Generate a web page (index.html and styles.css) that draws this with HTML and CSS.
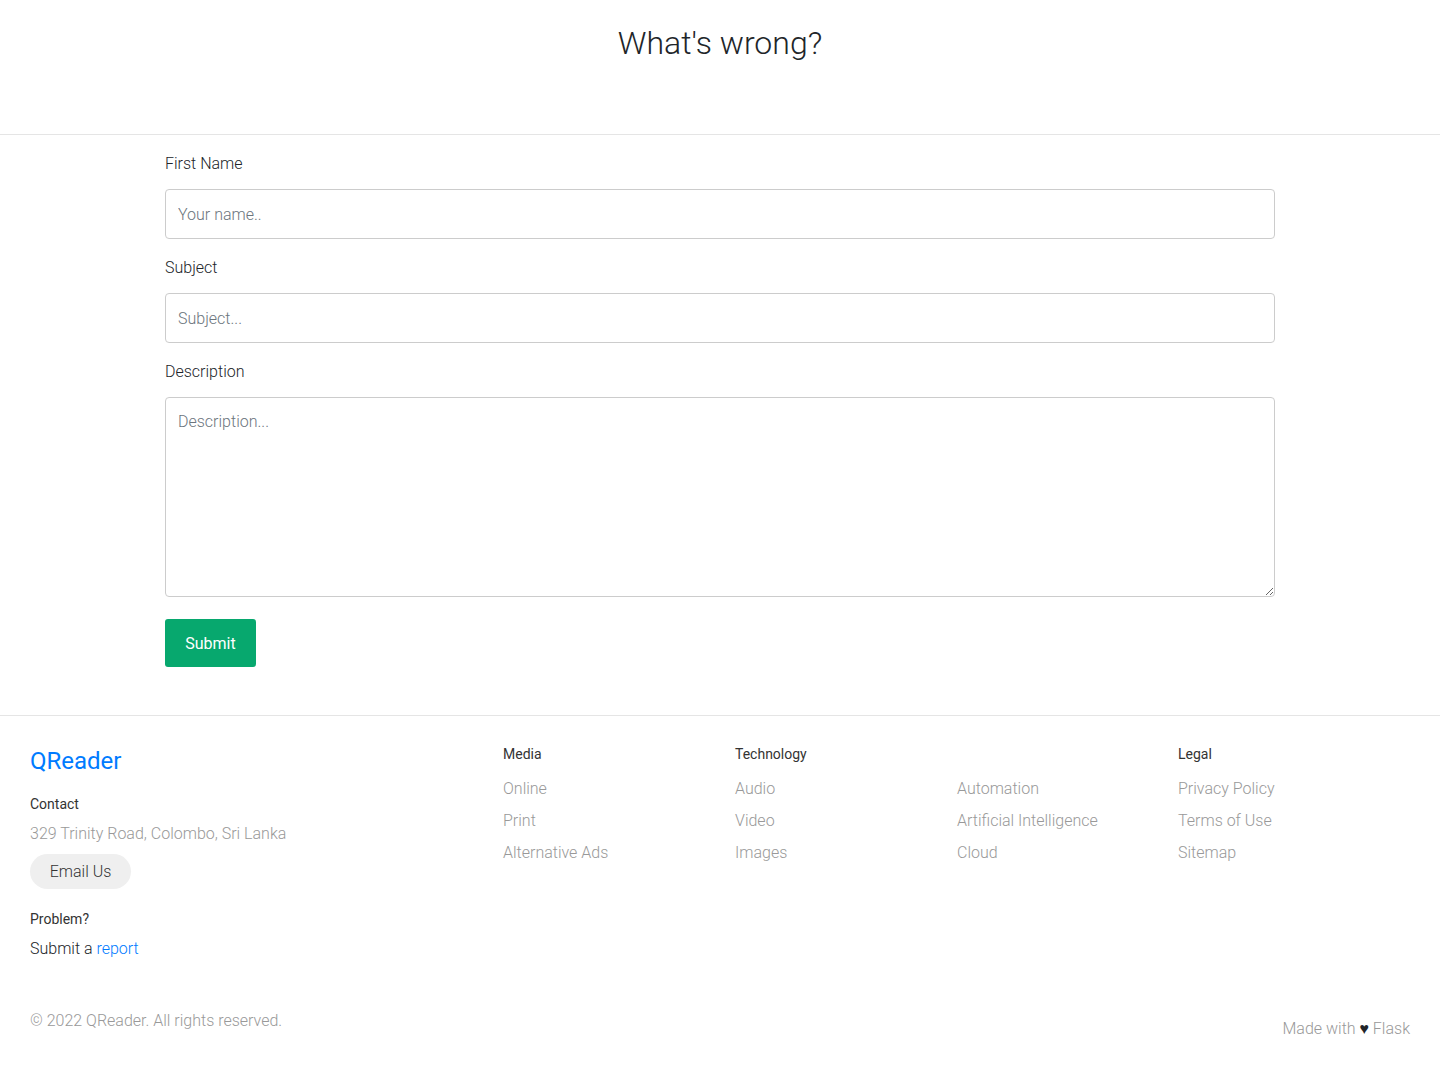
FILE: index.html
```html
<!DOCTYPE html>
<html lang="en">
<head>
<meta charset="utf-8">
<title>What's wrong? - QReader</title>
<link rel="stylesheet" href="styles.css">
</head>
<body>
<header class="page-header">
  <h1 class="page-title">What's wrong?</h1>
</header>
<main class="form-wrap">
  <form class="report-form">
    <label class="field-label" for="fname">First Name</label>
    <input class="field-input" id="fname" type="text" placeholder="Your name..">
    <label class="field-label" for="subject">Subject</label>
    <input class="field-input" id="subject" type="text" placeholder="Subject...">
    <label class="field-label" for="desc">Description</label>
    <textarea class="field-area" id="desc" placeholder="Description..."></textarea>
    <button class="submit-btn" type="button">Submit</button>
  </form>
</main>
<footer class="site-footer">
  <div class="footer-grid">
    <div class="footer-brand">
      <a class="brand" href="#">QReader</a>
      <h4 class="foot-head contact-head">Contact</h4>
      <p class="address">329 Trinity Road, Colombo, Sri Lanka</p>
      <a class="email-btn" href="#">Email Us</a>
      <h4 class="foot-head problem-head">Problem?</h4>
      <p class="report-line">Submit a <a href="#" class="report-link">report</a></p>
    </div>
    <div class="foot-col">
      <h4 class="foot-head col-head">Media</h4>
      <ul class="foot-links">
        <li><a href="#">Online</a></li>
        <li><a href="#">Print</a></li>
        <li><a href="#">Alternative Ads</a></li>
      </ul>
    </div>
    <div class="foot-col">
      <h4 class="foot-head col-head">Technology</h4>
      <ul class="foot-links">
        <li><a href="#">Audio</a></li>
        <li><a href="#">Video</a></li>
        <li><a href="#">Images</a></li>
      </ul>
    </div>
    <div class="foot-col">
      <h4 class="foot-head col-head col-head-empty">&nbsp;</h4>
      <ul class="foot-links">
        <li><a href="#">Automation</a></li>
        <li><a href="#">Artificial Intelligence</a></li>
        <li><a href="#">Cloud</a></li>
      </ul>
    </div>
    <div class="foot-col">
      <h4 class="foot-head col-head">Legal</h4>
      <ul class="foot-links">
        <li><a href="#">Privacy Policy</a></li>
        <li><a href="#">Terms of Use</a></li>
        <li><a href="#">Sitemap</a></li>
      </ul>
    </div>
  </div>
  <div class="footer-bottom">
    <p class="copyright">© 2022 QReader. All rights reserved.</p>
    <p class="made-with">Made with <span class="heart">♥</span> Flask</p>
  </div>
</footer>
</body>
</html>
```

FILE: styles.css
```css
* { box-sizing: border-box; }
html, body { margin: 0; padding: 0; }
body {
  font-family: Roboto, "Liberation Sans", sans-serif;
  font-weight: 300;
  font-size: 16px;
  line-height: 1.5;
  color: #212529;
  background: #fff;
}
a { text-decoration: none; }

.page-header {
  height: 135px;
  padding-top: 24px;
  border-bottom: 1px solid #e5e5e5;
  text-align: center;
}
.page-title {
  margin: 0;
  font-size: 32px;
  font-weight: 300;
  line-height: 1.2;
  color: #212529;
}

.form-wrap {
  width: 1110px;
  margin: 0 auto;
  padding: 16px 0 48px;
}
.report-form {
  display: flex;
  flex-direction: column;
  align-items: flex-start;
}
.field-label {
  display: block;
  font-size: 16px;
  line-height: 26px;
  margin-bottom: 12px;
  color: #212529;
}
.field-input, .field-area {
  width: 100%;
  font-family: inherit;
  font-weight: 300;
  font-size: 16px;
  color: #212529;
  border: 1px solid #cccccc;
  border-radius: 4px;
  padding: 0 12px;
  background: #fff;
  margin-bottom: 16px;
}
.field-input { height: 50px; }
.field-area {
  height: 200px;
  padding: 12px;
  line-height: 1.5;
  resize: vertical;
  margin-bottom: 22px;
}
.field-input::placeholder, .field-area::placeholder {
  color: #6c757d;
  opacity: 1;
}
.submit-btn {
  height: 48px;
  width: 91px;
  border: none;
  border-radius: 3px;
  background: #07a86e;
  color: #fff;
  font-family: inherit;
  font-weight: 400;
  font-size: 16px;
  cursor: pointer;
}

.site-footer {
  border-top: 1px solid #e5e5e5;
  padding: 28px 30px 0;
}
.footer-grid {
  display: grid;
  grid-template-columns: 473px 232px 222px 221px 1fr;
}
.brand {
  display: block;
  font-size: 24px;
  font-weight: 400;
  line-height: 34px;
  color: #007bff;
}
.foot-head {
  margin: 0;
  font-size: 14px;
  font-weight: 400;
  line-height: 21px;
  color: #333333;
}
.contact-head { margin-top: 16px; }
.address {
  margin: 7px 0 8px;
  color: #999;
  line-height: 24px;
}
.email-btn {
  display: inline-block;
  height: 35px;
  width: 101px;
  line-height: 35px;
  text-align: center;
  border-radius: 18px;
  background: #efefef;
  color: #333;
  font-size: 16px;
}
.problem-head { margin-top: 20px; }
.report-line {
  margin: 7px 0 0;
  line-height: 24px;
  color: #212529;
}
.report-link { color: #007bff; }

.col-head { margin-top: 0; }
.foot-links {
  list-style: none;
  margin: 12px 0 0;
  padding: 0;
}
.foot-links li {
  line-height: 24px;
  margin-bottom: 8px;
}
.foot-links a { color: #999; }

.footer-bottom {
  display: flex;
  justify-content: space-between;
  align-items: flex-start;
  margin-top: 48px;
}
.copyright {
  margin: 0;
  color: #999;
  line-height: 24px;
}
.made-with {
  margin: 8px 0 0;
  color: #999;
  line-height: 24px;
}
.heart { color: #212529; }
```
